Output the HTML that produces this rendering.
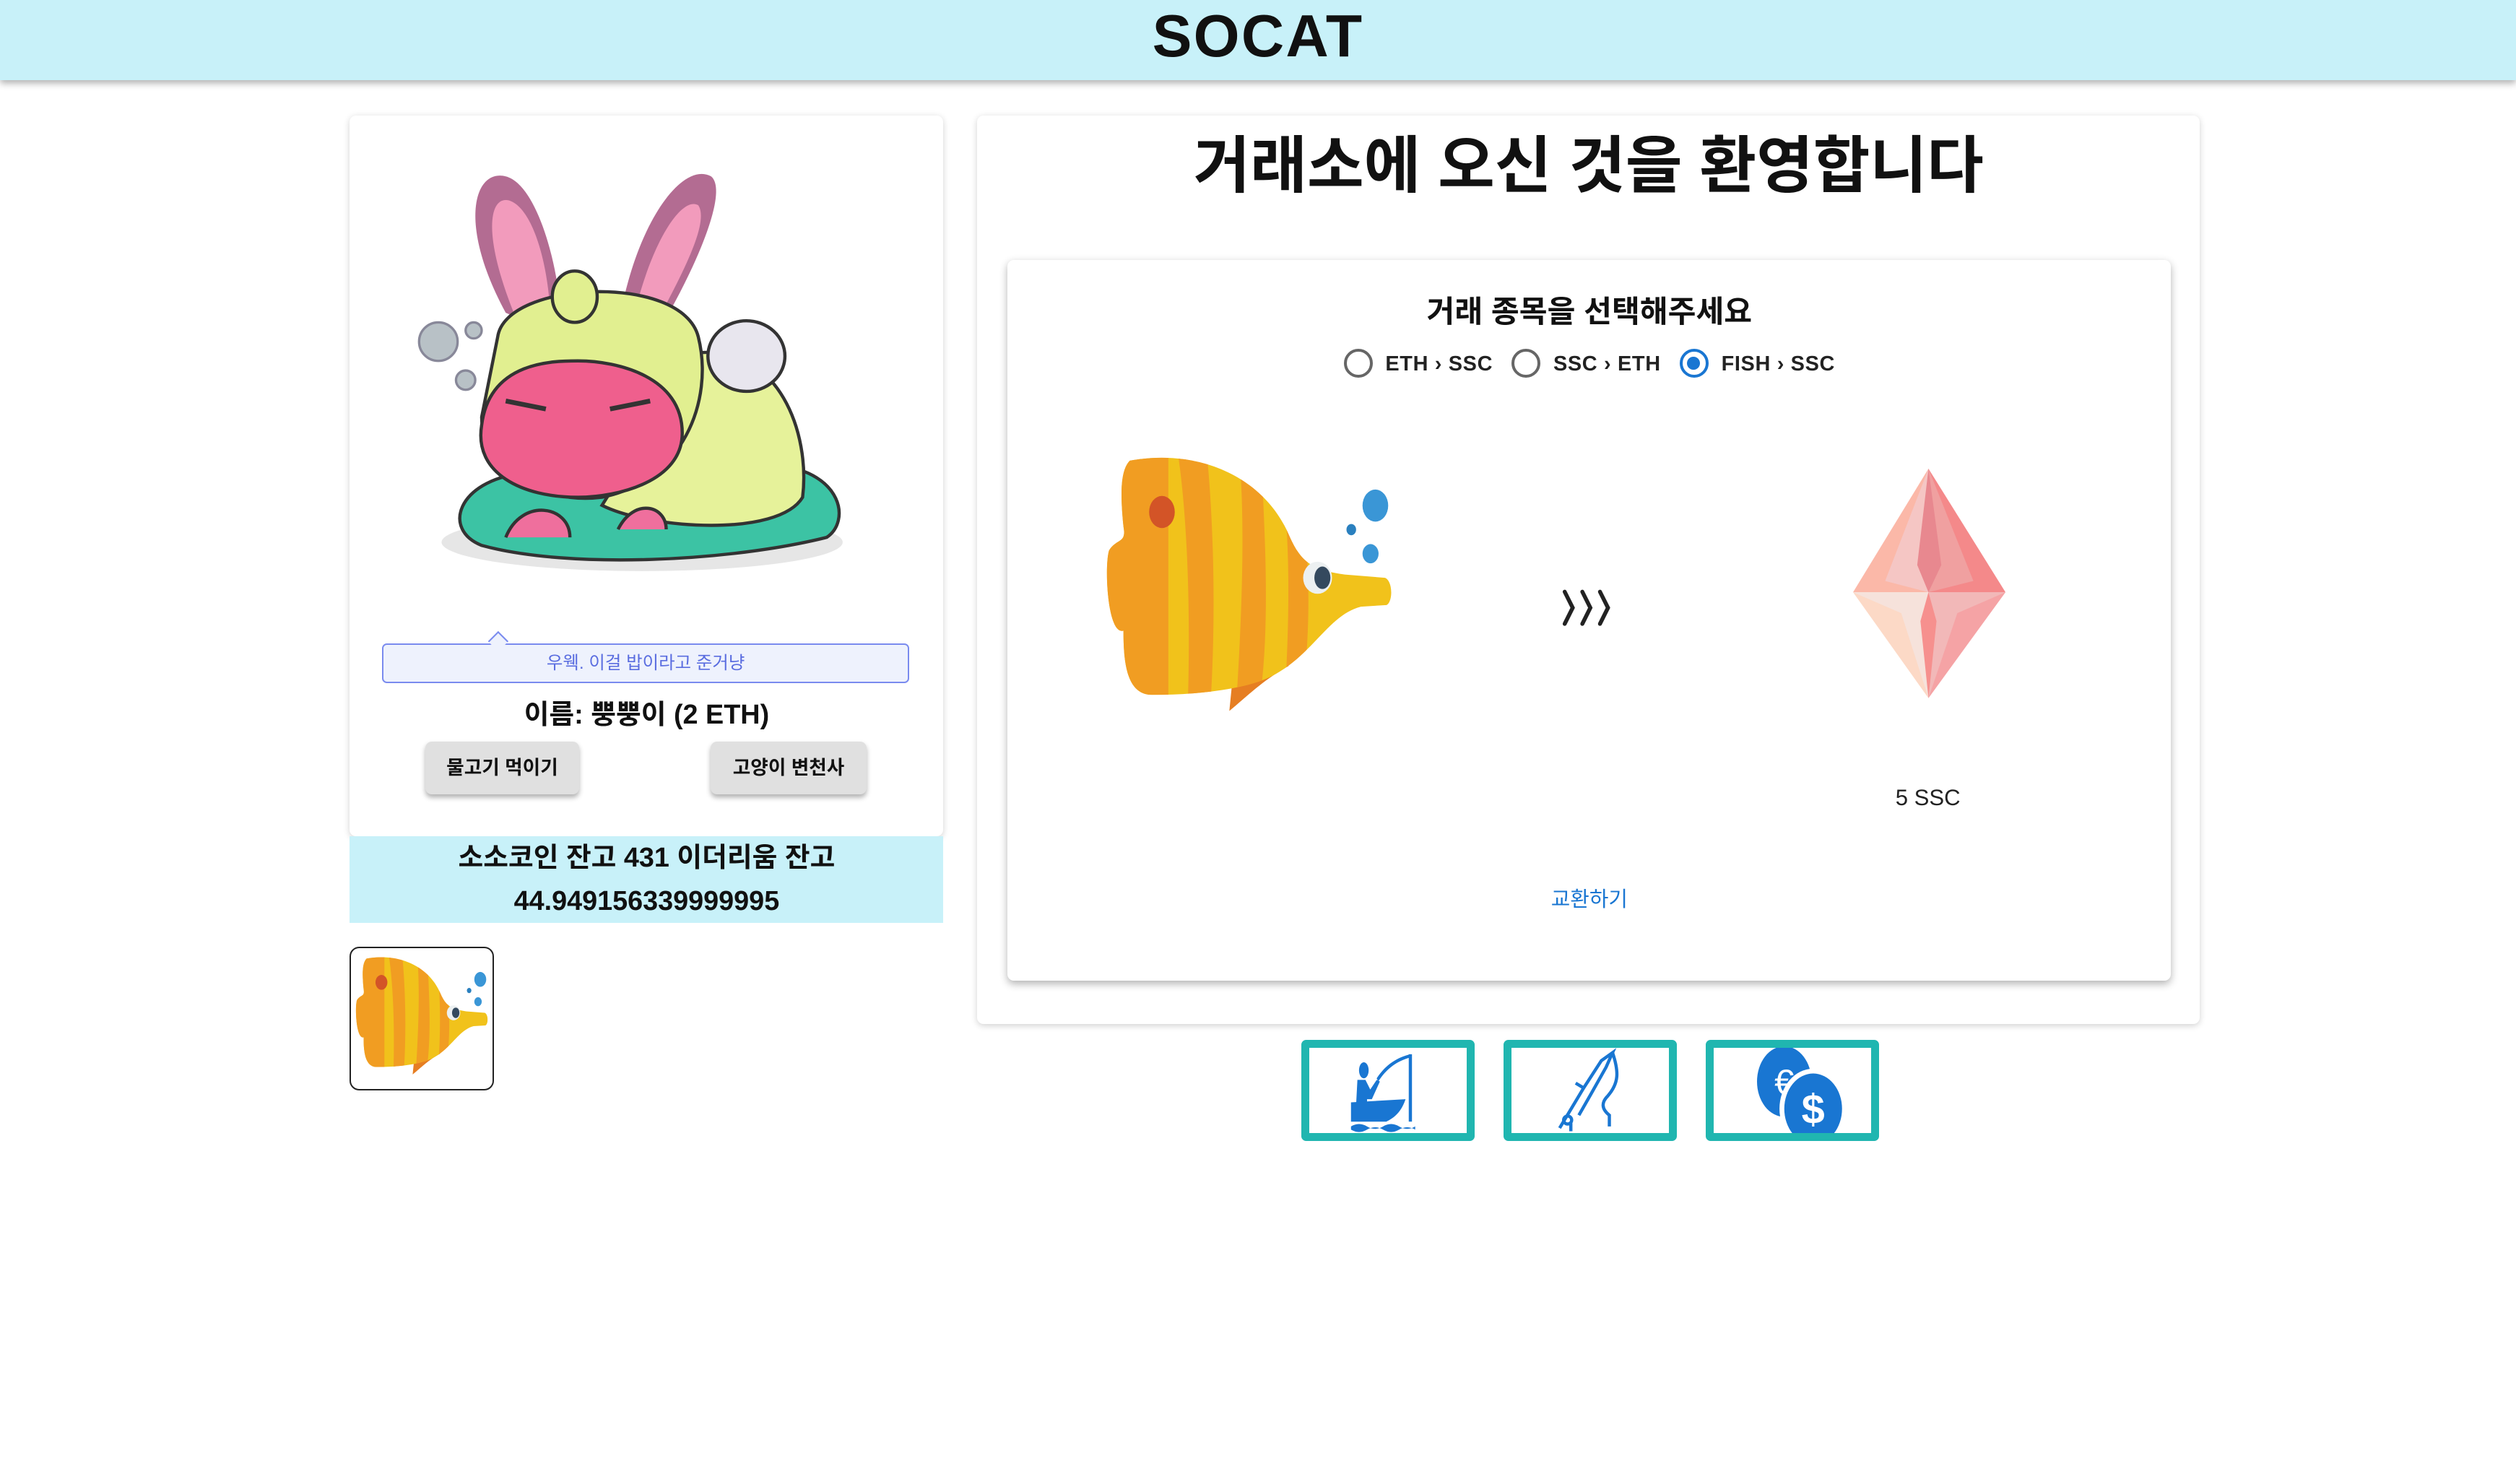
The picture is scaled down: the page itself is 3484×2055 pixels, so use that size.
<!DOCTYPE html>
<html><head><meta charset="utf-8">
<style>
html,body{margin:0;padding:0;background:#fff;}
body{width:3484px;height:2054px;overflow:hidden;}
#w{zoom:2.22194;width:1568px;height:925px;position:relative;font-family:"Liberation Sans","Noto Sans CJK KR",sans-serif;color:#111;}
.a{position:absolute;}
.hdr{left:0;top:0;width:1568px;height:50px;background:#c8f1f9;box-shadow:0 2px 4px rgba(0,0,0,.3);text-align:center;font-weight:bold;font-size:37px;line-height:46px;letter-spacing:1px;}
.card{background:#fff;box-shadow:0 1px 4px rgba(0,0,0,.18);border-radius:4px;}
.btn{background:#e0e0e0;border-radius:4px;box-shadow:0 2px 3px rgba(0,0,0,.3);font-size:12px;font-weight:bold;text-align:center;line-height:33px;}
.ib{width:98px;height:53px;border:5px solid #20b6b0;border-radius:3px;background:#fff;}
.rad{display:inline-block;border:2px solid #666;border-radius:50%;vertical-align:middle;margin:0 8px 0 0;position:relative;top:-1px;box-sizing:border-box;width:18px;height:18px;}
</style></head><body><div id="w">
<div class="a hdr">SOCAT</div>

<div class="a card" style="left:218px;top:72px;width:370px;height:449px;"></div>
<svg class="a" style="left:255px;top:100px" width="280" height="265" viewBox="0 0 280 265">
 <ellipse cx="145" cy="238" rx="125" ry="18" fill="#e6e6e6"/>
 <path d="M60 95 C30 40 40 5 60 10 C80 15 95 70 95 110 Z" fill="#b36c92"/>
 <path d="M65 95 C45 45 50 22 62 25 C78 30 88 70 88 105 Z" fill="#f29bbc"/>
 <path d="M130 105 C140 40 170 0 188 10 C200 20 175 75 150 115 Z" fill="#b36c92"/>
 <path d="M138 105 C150 50 170 22 180 28 C188 40 165 80 148 112 Z" fill="#f29bbc"/>
 <path d="M45 240 C20 230 30 200 70 195 L230 190 C270 195 275 225 260 235 C200 250 100 255 45 240Z" fill="#3cc3a4" stroke="#333" stroke-width="2"/>
 <path d="M180 120 C230 115 250 170 245 210 C230 235 150 230 120 215 Z" fill="#e6f29a" stroke="#333" stroke-width="2"/>
 <ellipse cx="210" cy="122" rx="24" ry="22" fill="#e8e6ee" stroke="#333" stroke-width="2"/>
 <path d="M55 110 C60 75 170 70 180 110 C190 150 170 200 120 210 C80 215 45 190 45 160 Z" fill="#e1ef90" stroke="#333" stroke-width="2"/>
 <ellipse cx="103" cy="85" rx="14" ry="16" fill="#e1ef90" stroke="#333" stroke-width="2"/>
 <path d="M45 165 C50 125 90 125 105 125 C130 125 170 135 170 170 C170 200 130 210 105 210 C70 210 40 195 45 165Z" fill="#ef5f8d" stroke="#333" stroke-width="2"/>
 <path d="M60 150 L85 155 M125 155 L150 150" stroke="#333" stroke-width="3"/>
 <path d="M60 235 C70 210 100 215 100 235 M130 230 C140 210 160 215 160 230" fill="#ef6f9d" stroke="#333" stroke-width="2"/>
 <circle cx="18" cy="113" r="12" fill="#b8c1c6" stroke="#889" stroke-width="1.5"/>
 <circle cx="35" cy="137" r="6" fill="#b8c1c6" stroke="#889" stroke-width="1.5"/>
 <circle cx="40" cy="106" r="5" fill="#b8c1c6" stroke="#889" stroke-width="1.5"/>
</svg>
<div class="a" style="left:238px;top:401px;width:327px;height:23px;border:1px solid #7a8bef;border-radius:3px;background:#eef2fd;color:#5a6de0;font-size:11px;text-align:center;line-height:23px;">우웩. 이걸 밥이라고 준거냥</div>
<div class="a" style="left:306px;top:395px;width:8px;height:8px;background:#eef2fd;border-left:1px solid #7a8bef;border-top:1px solid #7a8bef;transform:rotate(45deg);"></div>
<div class="a" style="left:218px;top:431px;width:370px;text-align:center;font-size:17px;font-weight:bold;">이름: 뿡뿡이 (2 ETH)</div>
<div class="a btn" style="left:265px;top:462px;width:96px;height:33px;">물고기 먹이기</div>
<div class="a btn" style="left:443px;top:462px;width:97px;height:33px;">고양이 변천사</div>
<div class="a" style="left:218px;top:521px;width:370px;height:54px;background:#c8f1f9;text-align:center;font-size:17px;font-weight:bold;line-height:27px;">소소코인 잔고 431 이더리움 잔고<br>44.949156339999995</div>

<div class="a" style="left:218px;top:590px;width:88px;height:88px;border:1px solid #222;border-radius:6px;overflow:hidden;">
<svg width="88" height="88" viewBox="-5 -5 190 180"><use href="#fish"/></svg></div>

<div class="a card" style="left:609px;top:72px;width:762px;height:566px;"></div>
<div class="a" style="left:609px;top:77px;width:762px;text-align:center;font-size:38.5px;font-weight:bold;line-height:54px;">거래소에 오신 것을 환영합니다</div>
<div class="a card" style="left:628px;top:162px;width:725px;height:449px;box-shadow:0 2px 5px rgba(0,0,0,.3);"></div>
<div class="a" style="left:628px;top:179px;width:725px;text-align:center;font-size:19px;font-weight:bold;">거래 종목을 선택해주세요</div>
<div class="a" style="left:628px;top:217px;width:725px;text-align:center;font-size:13px;font-weight:bold;color:#222;line-height:20px;letter-spacing:0.3px;">
<span class="rad"></span>ETH › SSC &nbsp;&nbsp;<span class="rad"></span>SSC › ETH &nbsp;&nbsp;<span class="rad" style="border-color:#1976d2"><span style="position:absolute;left:3px;top:3px;width:8px;height:8px;border-radius:50%;background:#1976d2"></span></span>FISH › SSC</div>

<svg class="a" style="left:688px;top:283px" width="184" height="162" viewBox="0 0 184 162">
<defs>
<g id="fish">
 <clipPath id="fc"><path d="M16 4 C60 -4 100 15 115 50 C122 66 128 72 150 75 L175 77 C180 79 180 92 176 94 L160 95 C140 100 130 125 105 138 C90 146 60 150 30 150 C14 150 12 130 12 110 C2 113 0 70 3 60 C8 52 14 56 12 45 C10 25 10 10 16 4 Z"/></clipPath>
 <path d="M80 140 C82 125 95 125 115 132 C100 140 90 150 78 160Z" fill="#e67e22"/>
 <g clip-path="url(#fc)">
  <rect x="0" y="0" width="184" height="160" fill="#f1c21b"/>
  <rect x="0" y="0" width="40" height="160" fill="#f19d22"/>
  <path d="M46 0 L64 0 C68 40 70 100 66 160 L52 160 C54 100 52 40 46 0Z" fill="#f19d22"/>
  <path d="M84 0 L98 5 C100 50 104 110 96 160 L82 160 C86 100 88 40 84 0Z" fill="#f19d22"/>
  <path d="M110 10 L122 20 C128 60 130 110 122 160 L112 160 C116 100 116 50 110 10Z" fill="#f19d22"/>
 </g>
 <ellipse cx="36" cy="36" rx="8" ry="10" fill="#d35427"/>
 <ellipse cx="133" cy="77" rx="9" ry="10" fill="#ecf0f1"/>
 <ellipse cx="136" cy="77" rx="5" ry="7" fill="#34495e"/>
 <ellipse cx="169" cy="32" rx="8" ry="10" fill="#3a96d6"/>
 <ellipse cx="154" cy="47" rx="3" ry="3.5" fill="#2a80bf"/>
 <ellipse cx="166" cy="62" rx="5" ry="6" fill="#3a96d6"/>
</g>
</defs>
<use href="#fish"/>
</svg>
<svg class="a" style="left:972px;top:367px" width="38" height="24" viewBox="0 0 38 24"><g fill="none" stroke="#222" stroke-width="2.5" stroke-linecap="round"><path d="M3 2 L8 12 L3 22 M14 2 L19 12 L14 22 M25 2 L30 12 L25 22"/></g></svg>

<svg class="a" style="left:1155px;top:292px" width="95" height="143" viewBox="0 0 95 143">
 <polygon points="47,0 0,77 47,77" fill="#fbb8a8"/>
 <polygon points="47,0 95,77 47,77" fill="#f4898a"/>
 <polygon points="47,0 20,70 47,77" fill="#f5c6c4"/>
 <polygon points="47,0 75,70 47,77" fill="#f0a0a0"/>
 <polygon points="47,0 55,60 47,77 40,60" fill="#e8888f"/>
 <polygon points="0,77 47,77 47,143" fill="#fcd9c6"/>
 <polygon points="95,77 47,77 47,143" fill="#f5a3a5"/>
 <polygon points="0,77 30,90 47,143 47,77" fill="#f6e2db"/>
 <polygon points="95,77 65,90 47,143 47,77" fill="#f2b8b8"/>
 <polygon points="47,77 52,95 47,143 42,95" fill="#f6908e"/>
</svg>
<div class="a" style="left:1150px;top:489px;width:103px;text-align:center;font-size:14px;color:#222;">5 SSC</div>
<div class="a" style="left:628px;top:550px;width:725px;text-align:center;font-size:13px;color:#1976d2;">교환하기</div>

<div class="a ib" style="left:811px;top:648px;">
<svg width="98" height="53" viewBox="0 0 98 53"><g fill="#1976d2">
<ellipse cx="34" cy="14" rx="3" ry="5"/>
<path d="M30 20 L35 20 L38 26 L42 20 L44 21 L39 32 L36 32 L36 39 L29 39Z"/>
<path d="M26 34 L60 32 C57 41 52 44 48 46 L26 46Z"/>
<rect x="62" y="4" width="2" height="42"/>
<path d="M42 19 C48 10 55 6 63 4 L63 6 C55 8 48 13 43 21Z"/>
<path d="M26 49 q5 -3 10 0 t10 0 t10 0 t10 0 l0 2 q-5 -3 -10 0 t-10 0 t-10 0 t-10 0Z"/>
</g></svg></div>
<div class="a ib" style="left:937px;top:648px;">
<svg width="98" height="53" viewBox="0 0 98 53"><g fill="none" stroke="#1976d2" stroke-width="2">
<path d="M30 50 L45 25 L56 8 L63 3 L59 12 L50 28 L42 42"/>
<path d="M63 3 C67 15 67 22 60 30 C56 34 56 38 61 42 L61 49"/>
<circle cx="35" cy="45" r="2.5"/><path d="M37 47 L37 52 M40 22 L45 25"/>
</g></svg></div>
<div class="a ib" style="left:1063px;top:648px;">
<svg width="98" height="53" viewBox="0 0 98 53">
<ellipse cx="44" cy="21" rx="17" ry="22" fill="#1976d2"/>
<text x="44" y="29" font-size="22" fill="#fff" text-anchor="middle" font-family="Liberation Sans">€</text>
<ellipse cx="62" cy="38" rx="21" ry="25" fill="#fff"/>
<ellipse cx="62" cy="38" rx="18" ry="22" fill="#1976d2"/>
<text x="62" y="47" font-size="26" fill="#fff" text-anchor="middle" font-weight="bold" font-family="Liberation Sans">$</text>
</svg></div>
</div></body></html>
